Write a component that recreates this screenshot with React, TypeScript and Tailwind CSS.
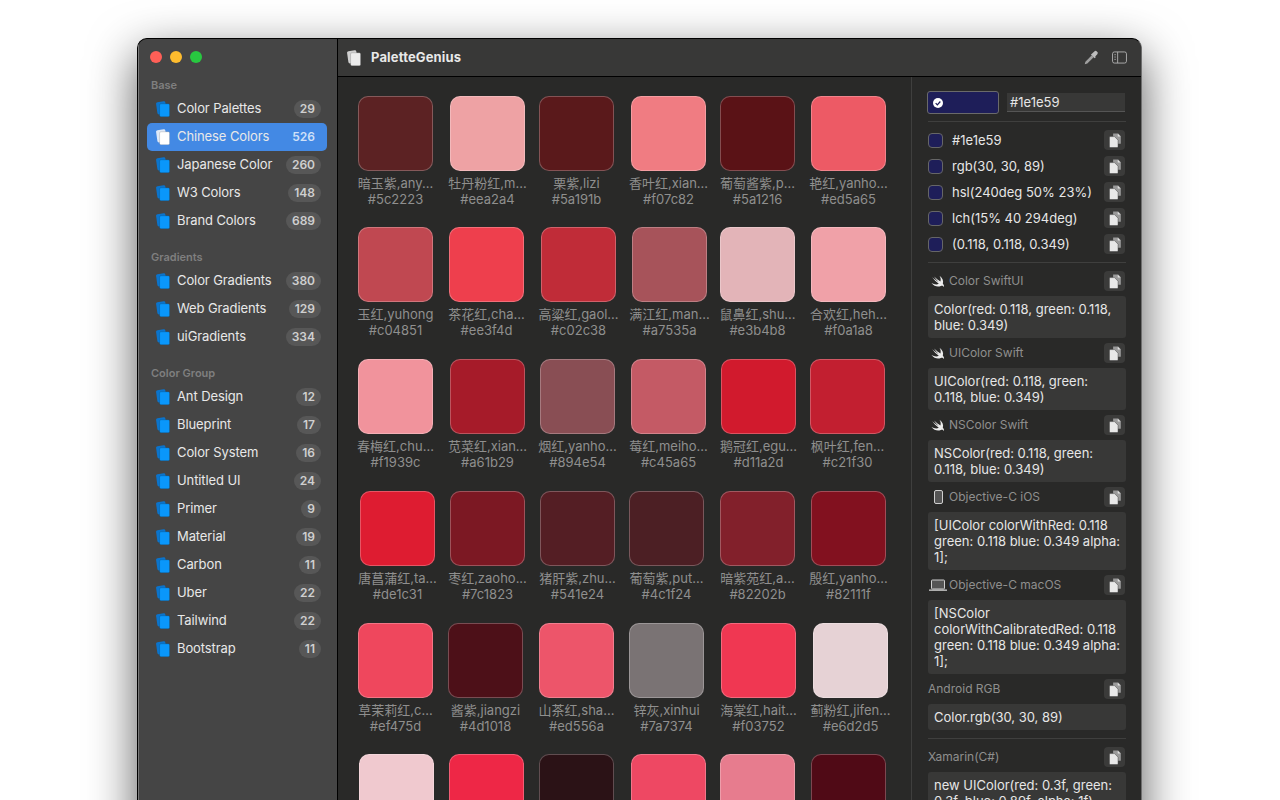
const sans = "font-['Inter','Noto_Sans_CJK_SC',sans-serif]"

type Item = { name: string; count: number }

const groups: { title: string; items: Item[] }[] = [
  {
    title: "Base",
    items: [
      { name: "Color Palettes", count: 29 },
      { name: "Chinese Colors", count: 526 },
      { name: "Japanese Color", count: 260 },
      { name: "W3 Colors", count: 148 },
      { name: "Brand Colors", count: 689 },
    ],
  },
  {
    title: "Gradients",
    items: [
      { name: "Color Gradients", count: 380 },
      { name: "Web Gradients", count: 129 },
      { name: "uiGradients", count: 334 },
    ],
  },
  {
    title: "Color Group",
    items: [
      { name: "Ant Design", count: 12 },
      { name: "Blueprint", count: 17 },
      { name: "Color System", count: 16 },
      { name: "Untitled UI", count: 24 },
      { name: "Primer", count: 9 },
      { name: "Material", count: 19 },
      { name: "Carbon", count: 11 },
      { name: "Uber", count: 22 },
      { name: "Tailwind", count: 22 },
      { name: "Bootstrap", count: 11 },
    ],
  },
]

// name, hex, gap to the previous swatch
type Swatch = [string, string, number]

const rows: Swatch[][] = [
  [
    ["暗玉紫,any...", "#5c2223", 20],
    ["牡丹粉红,m...", "#eea2a4", 17],
    ["栗紫,lizi", "#5a191b", 14],
    ["香叶红,xian...", "#f07c82", 17],
    ["葡萄酱紫,p...", "#5a1216", 14],
    ["艳红,yanho...", "#ed5a65", 16],
  ],
  [
    ["玉红,yuhong", "#c04851", 20],
    ["茶花红,cha...", "#ee3f4d", 16],
    ["高粱红,gaol...", "#c02c38", 17],
    ["满江红,man...", "#a7535a", 16],
    ["鼠鼻红,shu...", "#e3b4b8", 13],
    ["合欢红,heh...", "#f0a1a8", 16],
  ],
  [
    ["春梅红,chu...", "#f1939c", 20],
    ["苋菜红,xian...", "#a61b29", 17],
    ["烟红,yanho...", "#894e54", 15],
    ["莓红,meiho...", "#c45a65", 16],
    ["鹅冠红,egu...", "#d11a2d", 15],
    ["枫叶红,fen...", "#c21f30", 14],
  ],
  [
    ["唐菖蒲红,ta...", "#de1c31", 22],
    ["枣红,zaoho...", "#7c1823", 15],
    ["猪肝紫,zhu...", "#541e24", 15],
    ["葡萄紫,put...", "#4c1f24", 14],
    ["暗紫苑红,a...", "#82202b", 16],
    ["殷红,yanho...", "#82111f", 16],
  ],
  [
    ["草茉莉红,c...", "#ef475d", 20],
    ["酱紫,jiangzi", "#4d1018", 15],
    ["山茶红,sha...", "#ed556a", 16],
    ["锌灰,xinhui", "#7a7374", 15],
    ["海棠红,hait...", "#f03752", 17],
    ["蓟粉红,jifen...", "#e6d2d5", 17],
  ],
  // last row runs off the bottom of the window, labels not visible
  [
    ["", "#f0c9cf", 21],
    ["", "#ee2746", 15],
    ["", "#2b1216", 15],
    ["", "#ee4863", 17],
    ["", "#e77c8e", 14],
    ["", "#500a16", 16],
  ],
]

const values = ["#1e1e59", "rgb(30, 30, 89)", "hsl(240deg 50% 23%)", "lch(15% 40 294deg)", "(0.118, 0.118, 0.349)"]

function Stack({ className, back, front }: { className?: string; back: string; front: string }) {
  return (
    <svg viewBox="0 0 14 16" className={className}>
      <rect x="0.7" y="0.7" width="9.4" height="12.4" rx="1.6" transform="rotate(-8 5 7)" fill={back} />
      <rect x="3.6" y="2.8" width="10" height="13" rx="1.3" fill={front} stroke="rgba(0,0,0,0.3)" strokeWidth="0.5" />
    </svg>
  )
}

function CopyButton() {
  return (
    <button className="flex h-5 w-[21px] items-center justify-center rounded-[4px] bg-[#3b3b3a]">
      <svg viewBox="0 0 13 16" className="h-[15px] w-[12px]">
        <path d="M4.500 0.500h5.500l2.800 2.800v8.200h-8.300z" fill="#9a9a9a" />
        <path d="M9.500 0.800v3h3z" fill="#e0e0e0" />
        <path d="M1.500 3.800h4.500l3.800 3.800v7a1 1 0 0 1-1 1h-7.300a1 1 0 0 1-1-1v-9.800a1 1 0 0 1 1-1z" fill="#e8e8e8" stroke="#3b3b3a" strokeWidth="0.500" />
      </svg>
    </button>
  )
}

function Heading({ label, icon, first }: { label: string; icon?: React.ReactNode; first?: boolean }) {
  return (
    <div className={`mr-[1px] flex h-[20px] items-center justify-between ${first ? "mt-[8px]" : "mt-[5px]"}`}>
      <div className="flex items-center text-[12px] text-[#8f8f8e]">
        {icon}
        <span>{label}</span>
      </div>
      <CopyButton />
    </div>
  )
}

function Code({ children }: { children: string }) {
  return (
    <div className="mt-[5px] rounded-[3px] bg-[#383837] px-[6px] py-[5px] text-[13px] leading-[16px] text-[#e6e6e6]">
      {children}
    </div>
  )
}

const swift = (
  <svg viewBox="0 0 14 13" className="ml-[3px] mr-[4px] h-[13px] w-[14px]" fill="#ececec">
    <path d="M8.500 0.800C11.500 3 12.800 6 11.800 8.500C12.800 9.800 13.200 11 13 12C12.200 10.800 10.800 10.500 9.800 11C7 12.200 3 11.500 0.500 8C3 9.500 5.800 9.800 7.800 8.800C5.200 6.800 3 4.500 1.200 2.200C3.200 4 5.800 5.800 7.500 7C5.800 5.200 4.200 3.200 3 1.600C5.400 3.900 7.800 5.600 9.400 6.500C10 4.800 9.800 2.800 8.500 0.800Z" />
  </svg>
)

const phone = (
  <svg viewBox="0 0 9 14" className="ml-[6px] mr-[6px] h-[14px] w-[9px]" fill="#555" stroke="#cfcfcf">
    <rect x="0.500" y="0.500" width="8" height="13" rx="1.500" />
  </svg>
)

const laptop = (
  <svg viewBox="0 0 18 12" className="ml-[1px] mr-[2px] h-[12px] w-[18px]">
    <rect x="2.500" y="1" width="13" height="9" rx="0.800" fill="#555" stroke="#cfcfcf" />
    <rect x="0" y="10.500" width="18" height="1.300" fill="#cfcfcf" />
  </svg>
)

export default function App() {
  return (
    <div className={`h-[800px] overflow-hidden bg-white pt-[38px] ${sans}`}>
      <div className="mx-[137px] flex h-[800px] w-[1005px] overflow-hidden rounded-t-[10px] border border-black border-r-[#6e6e6e] bg-[#292928] shadow-[0_16px_48px_rgba(0,0,0,0.65)]">
        <aside className="w-[200px] shrink-0 border-l border-r border-l-[#7a7a7a] border-r-black bg-[#454545] pl-[8px] pr-[10px]">
          <div className="flex h-[34px] items-center gap-[8px] pl-[3px] pt-[1px]">
            <span className="h-3 w-3 rounded-full bg-[#ff5f57]" />
            <span className="h-3 w-3 rounded-full bg-[#febc2e]" />
            <span className="h-3 w-3 rounded-full bg-[#28c840]" />
          </div>
          {groups.map((g) => (
            <div key={g.title} className="mb-[10px]">
              <div className="flex h-[22px] items-center pl-[4px] pt-[2px] text-[11px] font-semibold text-[#7f7f7f]">
                {g.title}
              </div>
              {g.items.map((item) => {
                const on = item.name === "Chinese Colors"
                return (
                  <div
                    key={item.name}
                    className={`flex h-[28px] items-center rounded-[5px] pl-[9px] pr-[6px] ${on ? "bg-[#4389e4]" : ""}`}
                  >
                    <Stack
                      className="h-[16px] w-[14px] shrink-0"
                      back={on ? "#dfe9f7" : "#0b74cc"}
                      front={on ? "#ffffff" : "#0a97fb"}
                    />
                    <span className="ml-[7px] flex-1 text-[13px] tracking-[-0.1px] text-[#e8e8e8]">{item.name}</span>
                    <span
                      className={`flex h-[18px] min-w-[18px] items-center justify-center rounded-full px-[6px] text-[12px] font-semibold ${
                        on ? "text-[#cfe0f8]" : "bg-[#575757] text-[#cfcfcf]"
                      }`}
                    >
                      {item.count}
                    </span>
                  </div>
                )
              })}
            </div>
          ))}
        </aside>

        <div className="flex min-w-0 flex-1 flex-col">
          <header className="flex h-[38px] shrink-0 items-center border-b border-black bg-[#383837] pl-[9px] pr-[14px]">
            <Stack className="h-[16px] w-[14px]" back="#cfcfcf" front="#ececec" />
            <span className="ml-[10px] flex-1 text-[13px] font-bold tracking-[0.15px] text-[#e8e8e8]">PaletteGenius</span>
            <svg viewBox="0 0 16 16" className="h-[15px] w-[15px]">
              <path d="M0.800 15.200l0.700-2.700 6.800-6.800 2 2-6.800 6.800z" fill="#a0a0a0" />
              <path d="M8.700 3.800l2.300-2.300a2 2 0 0 1 2.700 0 2 2 0 0 1 0.500 3l-2.200 2.300 0.500 1-1.100 1-4-4z" fill="#bdbdbd" />
            </svg>
            <svg viewBox="0 0 16 14" className="ml-[13px] h-[13px] w-[15px]" fill="none" stroke="#b0b0b0">
              <rect x="0.500" y="1" width="15" height="12" rx="2" />
              <path d="M6 1v12" />
              <path d="M2.500 4h1.500M2.500 6.500h1.500M2.500 9h1.500" />
            </svg>
          </header>

          <div className="flex min-h-0 flex-1">
            <main className="flex-1 border-r border-[#3f3f3e] pt-[18.8px] text-[13px] leading-[16px] text-[#8f8f8e]">
              {rows.map((row, i) => (
                <div key={i} className="flex h-[131.7px]">
                  {row.map(([name, hex, gap]) => (
                    <div key={hex} className="flex w-[75px] shrink-0 flex-col items-center" style={{ marginLeft: gap }}>
                      <div
                        className="h-[75px] w-[75px] rounded-[10px] border border-white/25"
                        style={{ backgroundColor: hex }}
                      />
                      {name && <div className="mt-[4px] whitespace-nowrap">{name}</div>}
                      {name && <div className="whitespace-nowrap">{hex}</div>}
                    </div>
                  ))}
                </div>
              ))}
            </main>

            <section className="w-[229px] shrink-0 pl-[16px] pr-[15px] pt-[14px]">
              <div className="flex items-center border-b border-[#3f3f3e] pb-[7px]">
                <div className="-ml-[1px] flex h-[23px] w-[72px] items-center rounded-[3px] border border-[#6a6a6a] bg-[#1e1e59] pl-[5px]">
                  <svg viewBox="0 0 12 12" className="h-[10px] w-[10px]">
                    <circle cx="6" cy="6" r="6" fill="#fff" />
                    <path d="M3.200 6.200l2 2 3.600-4" fill="none" stroke="#1e1e59" strokeWidth="1.500" />
                  </svg>
                </div>
                <div className="ml-[8px] mr-[1px] flex h-[19px] flex-1 items-center border-b border-[#555] bg-[#383837] pl-[3px] pt-[1px] text-[13px] text-[#e6e6e6]">
                  #1e1e59
                </div>
              </div>

              <div className="border-b border-[#3f3f3e] pb-[5px] pt-[5px]">
                {values.map((v) => (
                  <div key={v} className="mr-[1px] flex h-[26px] items-center justify-between">
                    <div className="flex items-center gap-[9px] text-[13px] text-[#e6e6e6]">
                      <span className="h-[15px] w-[15px] rounded-[4px] border border-[#666] bg-[#1e1e59]" />
                      <span className="pt-[1px]">{v}</span>
                    </div>
                    <CopyButton />
                  </div>
                ))}
              </div>

              <Heading first label="Color SwiftUI" icon={swift} />
              <Code>Color(red: 0.118, green: 0.118, blue: 0.349)</Code>
              <Heading label="UIColor Swift" icon={swift} />
              <Code>UIColor(red: 0.118, green: 0.118, blue: 0.349)</Code>
              <Heading label="NSColor Swift" icon={swift} />
              <Code>NSColor(red: 0.118, green: 0.118, blue: 0.349)</Code>
              <Heading label="Objective-C iOS" icon={phone} />
              <Code>[UIColor colorWithRed: 0.118 green: 0.118 blue: 0.349 alpha: 1];</Code>
              <Heading label="Objective-C macOS" icon={laptop} />
              <Code>[NSColor colorWithCalibratedRed: 0.118 green: 0.118 blue: 0.349 alpha: 1];</Code>
              <Heading label="Android RGB" />
              <Code>Color.rgb(30, 30, 89)</Code>
              <div className="mt-[8px] border-t border-[#3f3f3e]" />
              <Heading first label="Xamarin(C#)" />
              <Code>new UIColor(red: 0.3f, green: 0.3f, blue: 0.89f, alpha: 1f)</Code>
            </section>
          </div>
        </div>
      </div>
    </div>
  )
}
